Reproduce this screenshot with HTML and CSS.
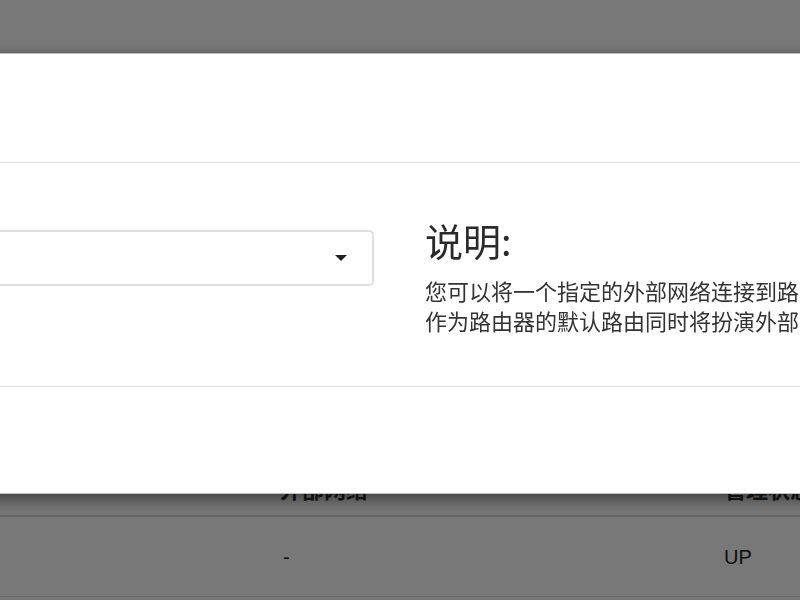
FILE: index.html
```html
<!DOCTYPE html>
<html lang="zh-CN">
<head>
<meta charset="utf-8">
<title>设置网关</title>
<link rel="stylesheet" href="styles.css">
</head>
<body>
<main class="page">
  <table class="routers">
    <colgroup>
      <col class="col-name">
      <col class="col-net">
      <col class="col-admin">
    </colgroup>
    <thead>
      <tr><th></th><th>外部网络</th><th>管理状态</th></tr>
    </thead>
    <tbody>
      <tr><td></td><td>-</td><td>UP</td></tr>
    </tbody>
  </table>
</main>

<div class="backdrop"></div>

<div class="modal" role="dialog">
  <div class="modal-header"></div>
  <div class="modal-body">
    <div class="form-col">
      <div class="select">
        <span class="select-value"></span>
        <span class="caret"></span>
      </div>
    </div>
    <div class="help-col">
      <h3 class="help-title">说明:</h3>
      <p class="help-text">您可以将一个指定的外部网络连接到路由器。外部网络<br>作为路由器的默认路由同时将扮演外部网络的网关。</p>
    </div>
  </div>
  <div class="modal-footer"></div>
</div>
</body>
</html>
```
FILE: styles.css
```css
html, body {
  margin: 0;
  padding: 0;
  height: 100%;
  overflow: hidden;
}
body {
  background: #fff;
  color: #333;
  font-family: "Liberation Sans", "Noto Sans CJK SC", sans-serif;
}
.page {
  padding-top: 468px;
}
.routers {
  width: 100%;
  border-collapse: collapse;
  table-layout: fixed;
}
.col-name { width: 272px; }
.col-net { width: 444px; }
.routers th {
  text-align: left;
  font-weight: bold;
  font-size: 22px;
  line-height: 30px;
  padding: 5px 8px 12px;
  white-space: nowrap;
  overflow: hidden;
  border-bottom: 2px solid #dcdcdc;
  font-family: "Noto Sans CJK SC", sans-serif;
}
.routers td {
  font-size: 20px;
  line-height: 30px;
  padding: 25px 8px 24px 8px;
  border-bottom: 1px solid #ddd;
  color: #222;
  white-space: nowrap;
}
.routers td:nth-child(2) { padding-left: 11px; }
.backdrop {
  position: fixed;
  inset: 0;
  background: rgba(0, 0, 0, 0.53);
}
.modal {
  position: absolute;
  top: 53px;
  left: -400px;
  width: 1600px;
  background: #fff;
  border: 1px solid rgba(0, 0, 0, 0.25);
  border-radius: 6px;
  box-shadow: 0 5px 15px rgba(0, 0, 0, 0.5);
}
.modal-header {
  height: 108px;
  border-bottom: 1px solid #e5e5e5;
}
.modal-body {
  box-sizing: border-box;
  height: 223px;
  padding: 20px 20px;
  display: grid;
  grid-template-columns: 753px 1fr;
  column-gap: 51px;
}
.form-col {
  padding-top: 47px;
}
.select {
  box-sizing: border-box;
  height: 56px;
  border: 2px solid #dedede;
  border-radius: 5px;
  display: flex;
  align-items: center;
  justify-content: flex-end;
  padding-right: 25px;
}
.caret {
  width: 0;
  height: 0;
  border-left: 6px solid transparent;
  border-right: 6px solid transparent;
  border-top: 6px solid #222;
}
.help-title {
  margin: 36px 0 0;
  font-size: 38px;
  line-height: 42px;
  font-weight: normal;
  color: #2a2a2a;
  font-family: "Noto Sans CJK SC", sans-serif;
}
.help-text {
  margin: 14px 0 0;
  font-size: 22px;
  line-height: 30px;
  color: #333;
  white-space: nowrap;
  font-family: "Noto Sans CJK SC", sans-serif;
}
.modal-footer {
  height: 106px;
  border-top: 1px solid #e5e5e5;
}
```
